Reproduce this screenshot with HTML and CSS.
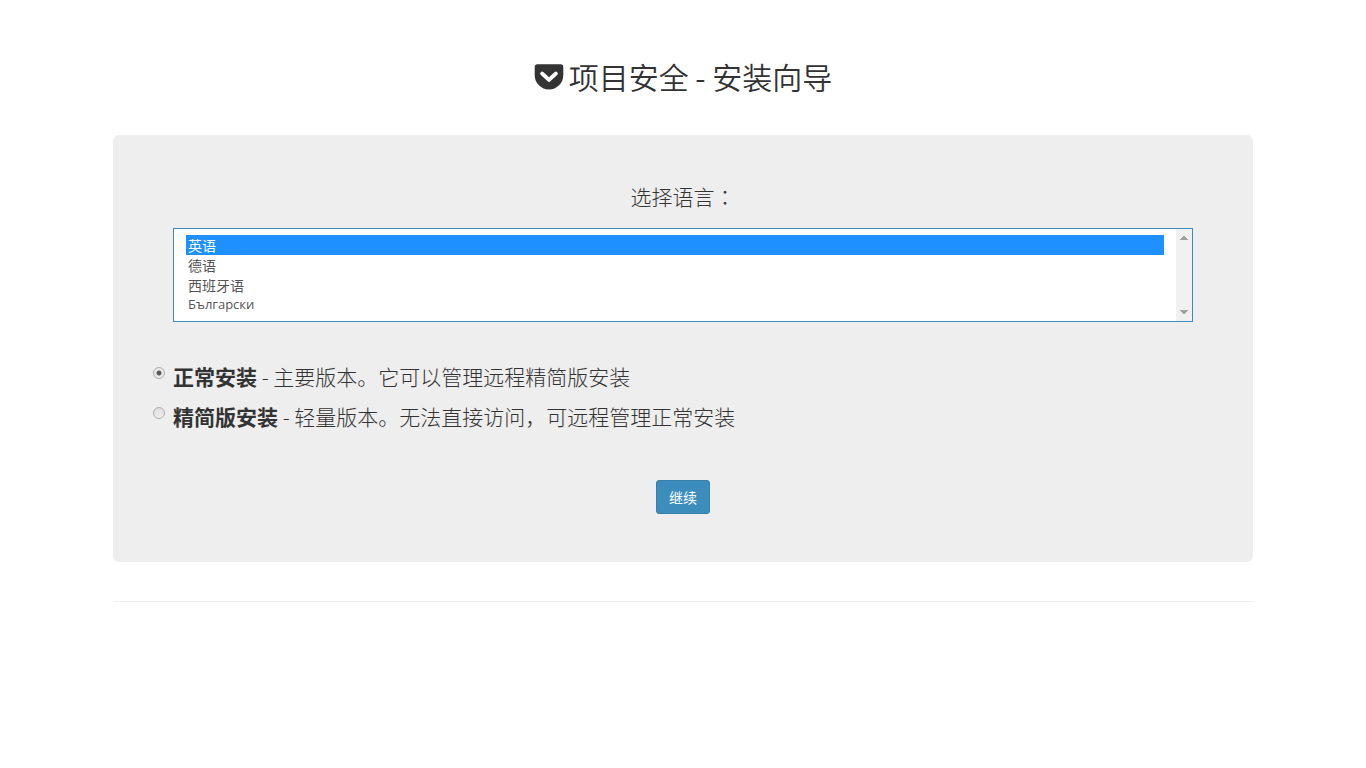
FILE: index.html
```html
<!DOCTYPE html>
<html lang="zh-CN">
<head>
<meta charset="UTF-8">
<meta name="viewport" content="width=device-width, initial-scale=1.0">
<title>项目安全 - 安装向导</title>
<link rel="stylesheet" href="styles.css">
</head>
<body>
<div class="container">
    <h2 class="title">
        <svg class="title-icon" viewBox="0 0 30 26" aria-hidden="true">
            <path fill="#333" d="M3.300 0.300h23.400a2.600 2.600 0 0 1 2.600 2.600v8.100a14.300 14.500 0 0 1-28.600 0V2.900a2.600 2.600 0 0 1 2.600-2.600z"/>
            <path fill="none" stroke="#fff" stroke-width="4" stroke-linecap="round" stroke-linejoin="round" d="M8.200 9.600L15 15.900l6.800-6.300"/>
        </svg>
        <span>项目安全 - 安装向导</span>
    </h2>

    <form class="jumbotron">
        <label class="language-label" for="language">选择语言<span class="colon" lang="ja">：</span></label>
        <div class="select-wrap">
            <select class="language-select" id="language" name="language" size="4">
                <option value="en" selected>英语</option>
                <option value="de">德语</option>
                <option value="es">西班牙语</option>
                <option class="cyrillic" value="bg">Български</option>
            </select>
            <div class="scrollbar" aria-hidden="true">
                <svg width="8" height="4" viewBox="0 0 8 4" shape-rendering="crispEdges"><path fill="#a3a3a3" d="M3 0h2v1h1v1h1v1h1v1H0V3h1V2h1V1h1z"/></svg>
                <svg width="8" height="4" viewBox="0 0 8 4" shape-rendering="crispEdges"><path fill="#a3a3a3" d="M0 0h8v1H7v1H6v1H5v1H3V3H2V2H1V1H0z"/></svg>
            </div>
        </div>

        <div class="install-types">
            <label class="radio" for="typeFull">
                <input type="radio" id="typeFull" name="type" value="full" checked>
                <span><strong>正常安装</strong> - 主要版本。它可以管理远程精简版安装</span>
            </label>
            <label class="radio" for="typeLight">
                <input type="radio" id="typeLight" name="type" value="light">
                <span><strong>精简版安装</strong> - 轻量版本。无法直接访问，可远程管理正常安装</span>
            </label>
        </div>

        <button class="btn" type="submit">继续</button>
    </form>

    <hr>
</div>
</body>
</html>
```

FILE: styles.css
```css
* {
  box-sizing: border-box;
}
body {
  margin: 0;
  font-family: "Noto Sans CJK SC", sans-serif;
  font-size: 14px;
  line-height: 20px;
  color: #333;
  background-color: #fff;
}
.container {
  max-width: 1170px;
  margin: 0 auto;
  padding: 0 15px;
}
.title {
  display: flex;
  justify-content: center;
  align-items: center;
  gap: 5px;
  margin: 60px 0 42px;
  font-size: 30px;
  font-weight: 350;
  line-height: 33px;
}
.title-icon {
  width: 30px;
  height: 26px;
}
.jumbotron {
  display: flex;
  flex-direction: column;
  padding: 48px 60px;
  border-radius: 6px;
  background-color: #eee;
}
.language-label {
  margin-bottom: 19px;
  font-size: 21px;
  font-weight: 300;
  line-height: 26px;
  text-align: center;
}
.colon {
  font-family: "Noto Sans CJK JP", sans-serif;
  line-height: 1;
}
.select-wrap {
  position: relative;
}
.language-select {
  display: block;
  width: 100%;
  padding: 6px 28px 6px 12px;
  border: 1px solid #3c8dbc;
  border-radius: 0;
  outline: none;
  font-family: inherit;
  font-size: 14px;
  line-height: 20px;
  color: #555;
  background-color: #fff;
}
.language-select option {
  height: 20px;
  min-height: 20px;
  padding: 0 2px;
  font-size: 14px;
  line-height: 18px;
}
.language-select option.cyrillic {
  font-family: "Open Sans", sans-serif;
  font-size: 13px;
}
.language-select option:checked {
  color: #fff;
  background: #1e90ff linear-gradient(#1e90ff, #1e90ff);
}
.scrollbar {
  position: absolute;
  top: 1px;
  right: 1px;
  bottom: 1px;
  display: flex;
  flex-direction: column;
  justify-content: space-between;
  align-items: center;
  width: 16px;
  padding: 7px 0;
  background-color: #f1f1f1;
  pointer-events: none;
}
.install-types {
  margin: 40px 0 48px -20px;
}
.radio {
  display: flex;
  align-items: flex-start;
  gap: 8px;
  margin-bottom: 12px;
  font-size: 21px;
  font-weight: 300;
  line-height: 28px;
  cursor: pointer;
}
.radio:last-child {
  margin-bottom: 2px;
}
.radio strong {
  font-weight: 700;
}
.radio input {
  flex: none;
  appearance: none;
  width: 12px;
  height: 12px;
  margin: 5px 0 0;
  border: 1px solid #acacac;
  border-radius: 50%;
  background: linear-gradient(#ddd, #eee);
}
.radio input:checked {
  background: radial-gradient(circle, #5a5a5a 0, #5a5a5a 2px, #eaeaea 3px);
}
.btn {
  align-self: center;
  padding: 6px 12px;
  border: 1px solid #367fa9;
  border-radius: 3px;
  font-family: inherit;
  font-size: 14px;
  line-height: 20px;
  color: #fff;
  background-color: #3c8dbc;
  cursor: pointer;
}
.btn:hover {
  background-color: #367fa9;
}
hr {
  margin: 39px 0 20px;
  border: 0;
  border-top: 1px solid #eee;
}
```
